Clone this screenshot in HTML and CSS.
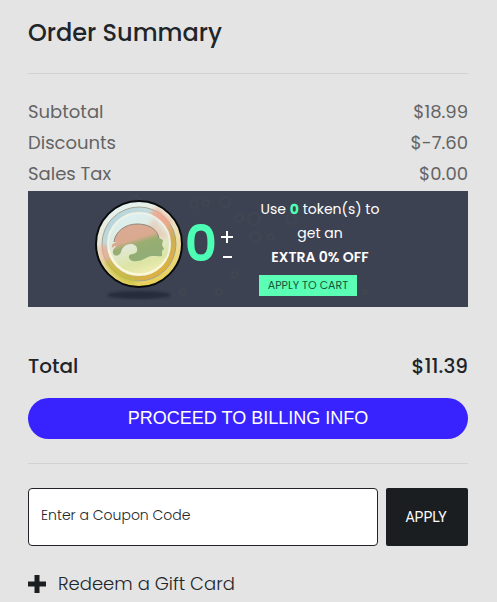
FILE: index.html
```html
<!DOCTYPE html>
<html lang="en">
<head>
    <meta charset="UTF-8">
    <meta name="viewport" content="width=device-width, initial-scale=1.0">
    <title>Order Summary</title>
    <link rel="stylesheet" href="styles.css">
</head>
<body>
    <main class="summary">
        <h1 class="summary-title">Order Summary</h1>
        <hr class="divider">

        <dl class="costs">
            <div class="cost-row">
                <dt>Subtotal</dt>
                <dd>$18.99</dd>
            </div>
            <div class="cost-row">
                <dt>Discounts</dt>
                <dd>$-7.60</dd>
            </div>
            <div class="cost-row">
                <dt>Sales Tax</dt>
                <dd>$0.00</dd>
            </div>
        </dl>

        <section class="tokens">
            <svg class="tokens-pattern" width="440" height="116" viewBox="0 0 440 116" fill="none" stroke="#424653" stroke-width="2" aria-hidden="true">
                <circle cx="107" cy="10" r="5"/>
                <circle cx="166" cy="13" r="4"/>
                <circle cx="178" cy="12" r="3"/>
                <circle cx="197" cy="11" r="5"/>
                <circle cx="211" cy="27" r="4"/>
                <circle cx="226" cy="28" r="6"/>
                <circle cx="263" cy="28" r="5"/>
                <circle cx="227" cy="46" r="5"/>
                <circle cx="243" cy="46" r="3"/>
                <circle cx="207" cy="84" r="3"/>
                <circle cx="155" cy="101" r="3"/>
                <circle cx="191" cy="101" r="3"/>
                <circle cx="337" cy="101" r="2"/>
            </svg>
            <svg class="coin" width="88" height="100" viewBox="0 0 88 100" aria-hidden="true">
                <defs>
                    <linearGradient id="coinRim" x1="0.3" y1="0" x2="0.7" y2="1">
                        <stop offset="0" stop-color="#e4f4f4"/>
                        <stop offset="0.35" stop-color="#ebe6d6"/>
                        <stop offset="0.65" stop-color="#eedc98"/>
                        <stop offset="1" stop-color="#e8cd4c"/>
                    </linearGradient>
                    <linearGradient id="coinRing" x1="0.1" y1="0.1" x2="0.8" y2="0.9">
                        <stop offset="0" stop-color="#b5d4dc"/>
                        <stop offset="0.3" stop-color="#c3dbdc"/>
                        <stop offset="0.5" stop-color="#e8ae94"/>
                        <stop offset="0.75" stop-color="#cfae58"/>
                        <stop offset="1" stop-color="#dfb13c"/>
                    </linearGradient>
                    <linearGradient id="coinFace" x1="0.3" y1="0" x2="0.6" y2="1">
                        <stop offset="0" stop-color="#dbf0f3"/>
                        <stop offset="0.5" stop-color="#e1e9d7"/>
                        <stop offset="0.8" stop-color="#dce4a4"/>
                        <stop offset="1" stop-color="#f2eeb4"/>
                    </linearGradient>
                    <linearGradient id="coinHead" x1="0.3" y1="0" x2="0.65" y2="0.8">
                        <stop offset="0" stop-color="#dda995"/>
                        <stop offset="0.48" stop-color="#d9aa8f"/>
                        <stop offset="0.65" stop-color="#99ad70"/>
                        <stop offset="1" stop-color="#92ad75"/>
                    </linearGradient>
                    <filter id="soft" x="-20%" y="-100%" width="140%" height="300%">
                        <feGaussianBlur stdDeviation="1.5"/>
                    </filter>
                    <filter id="blend" x="-20%" y="-20%" width="140%" height="140%">
                        <feGaussianBlur stdDeviation="2"/>
                    </filter>
                    <clipPath id="coinClip">
                        <circle cx="44" cy="44" r="42"/>
                    </clipPath>
                </defs>
                <ellipse cx="44" cy="95" rx="32" ry="4" fill="#252b3a" filter="url(#soft)"/>
                <circle cx="44" cy="44" r="43" fill="url(#coinRim)" stroke="#080b0c" stroke-width="2"/>
                <circle cx="44" cy="44" r="37" fill="url(#coinRing)" stroke="#a3a694" stroke-width="1"/>
                <g clip-path="url(#coinClip)" filter="url(#blend)">
                    <path d="M51 20 62 7 77 22 65 34Z" fill="#efa78e" opacity="0.8"/>
                    <path d="M4 47 14 44 20 61 10 65Z" fill="#e7ad95" opacity="0.8"/>
                    <path d="M9 62 16 58Q26 75 43 79L38 85Q18 80 9 62Z" fill="#c4c13c" opacity="0.8"/>
                </g>
                <circle cx="44" cy="44" r="31" fill="url(#coinFace)" stroke="#eef2e7" stroke-width="2"/>
                <path d="M58 17 74 37Q72 40 49 38Z" fill="#efb39a" opacity="0.45" filter="url(#blend)"/>
                <path d="M19 42C20 32 30 24 42 24C54 24 62 29 64 38L68 40L67 45L69 49L67 51L67 56C62 57 58 55 53 57C49 59 46 61 42 61C37 62 33 59 34 56C35 53 41 55 42 51C43 47 40 44 36 44C30 44 27 48 26 52C25 56 19 57 18 53C17 49 20 48 22 45C20 47 18 46 17 48C16 44 19 43 22 42Z" fill="url(#coinHead)"/>
                <path d="M19 42C20 32 30 24 42 24C54 24 62 29 64 38" fill="none" stroke="#8b8b7d" stroke-width="1"/>
                <path d="M14 50A31 31 0 0 0 71 59" fill="none" stroke="#fbf8d8" stroke-width="2"/>
            </svg>
            <output class="token-count" id="tokenCount">0</output>
            <div class="token-steps">
                <button type="button" class="step" aria-label="Add a token">
                    <svg width="12" height="12" viewBox="0 0 12 12"><path d="M6 0V12M0 6H12" stroke="#fff" stroke-width="2"/></svg>
                </button>
                <button type="button" class="step" aria-label="Remove a token">
                    <svg width="12" height="12" viewBox="0 0 12 12"><path d="M2 6H11" stroke="#fff" stroke-width="2"/></svg>
                </button>
            </div>
            <div class="token-offer">
                <p class="offer-text">Use <b class="offer-number">0</b> token(s) to<br>get an<br><b class="offer-deal">EXTRA 0% OFF</b></p>
                <button type="button" class="offer-button">APPLY TO CART</button>
            </div>
        </section>

        <div class="total">
            <span>Total</span>
            <span>$11.39</span>
        </div>
        <button type="button" class="proceed">PROCEED TO BILLING INFO</button>
        <hr class="divider">

        <form class="coupon">
            <input type="text" class="coupon-input" name="coupon" placeholder="Enter a Coupon Code" aria-label="Enter a Coupon Code">
            <button type="button" class="coupon-button">APPLY</button>
        </form>

        <a href="#" class="gift">
            <svg width="18" height="18" viewBox="0 0 18 18" aria-hidden="true"><path d="M9 0V18M0 9H18" stroke="#1a1e21" stroke-width="5"/></svg>
            Redeem a Gift Card
        </a>
    </main>
</body>
</html>
```

FILE: styles.css
```css
* {
    box-sizing: border-box;
}

body {
    margin: 0;
    background: #e4e4e4;
    color: #212529;
    font-family: Poppins, Inter, sans-serif;
}

button {
    border: 0;
    padding: 0;
    cursor: pointer;
}

.summary {
    padding: 16px 29px 0 28px;
}

.summary-title {
    margin: 0 0 24px;
    font-size: 24px;
    font-weight: 500;
    line-height: 33px;
}

.divider {
    height: 1px;
    margin: 24px 0;
    border: 0;
    background: #d1d2d3;
}

.costs {
    margin: -2px 0 2px;
    color: #636363;
    font-size: 18px;
    line-height: 31px;
}

.cost-row,
.total {
    display: flex;
    justify-content: space-between;
}

.cost-row dd {
    margin: 0;
}

.tokens {
    position: relative;
    display: flex;
    justify-content: center;
    align-items: flex-start;
    height: 116px;
    padding: 9px 20px 0 0;
    background: #3d4252;
    color: #fff;
    overflow: hidden;
}

/* faint rings behind the banner content */
.tokens-pattern {
    position: absolute;
    top: 0;
    left: 0;
}

.coin,
.token-count,
.token-steps,
.token-offer {
    position: relative;
    flex: none;
}

.token-count {
    width: 36px;
    color: #4dffb5;
    font-size: 50px;
    font-weight: 600;
    line-height: 88px;
    text-align: center;
}

.token-steps {
    display: flex;
    flex-direction: column;
    gap: 8px;
    margin: 31px 26px 0 2px;
}

.step {
    display: block;
    width: 12px;
    height: 12px;
    background: none;
}

.step svg {
    display: block;
}

.token-offer {
    width: 122px;
    margin-top: -3px;
}

.offer-text {
    margin: 0 0 6px;
    font-size: 14px;
    line-height: 24px;
    text-align: center;
    white-space: nowrap;
}

.offer-number {
    color: #4dffb5;
}

.offer-deal {
    font-weight: 600;
}

.offer-button {
    display: block;
    width: 98px;
    height: 21px;
    background: #5affb5;
    color: #17543c;
    font: 11px Poppins, Inter, sans-serif;
}

.total {
    margin: 44px 0 16px;
    font-size: 20px;
    font-weight: 500;
    line-height: 31px;
}

.proceed {
    display: block;
    width: 100%;
    height: 41px;
    border-radius: 21px;
    background: #3823ff;
    color: #fff;
    font: 18px "Liberation Sans", Arial, sans-serif;
}

.coupon {
    display: flex;
    gap: 8px;
    margin-bottom: 23px;
}

.coupon-input {
    flex: 1;
    min-width: 0;
    height: 58px;
    padding: 0 12px 4px;
    border: 1px solid #212529;
    border-radius: 4px;
    background: #fff;
    color: #212529;
    font: 300 14px Poppins, Inter, sans-serif;
}

.coupon-input::placeholder {
    color: #212529;
    opacity: 1;
}

.coupon-button {
    width: 82px;
    height: 58px;
    padding-right: 2px;
    border-radius: 2px;
    background: #1a1e21;
    color: #fff;
    font: 14px Roboto, Arial, sans-serif;
}

.gift {
    display: flex;
    align-items: center;
    gap: 12px;
    color: #212529;
    font-size: 18px;
    font-weight: 300;
    line-height: 30px;
    text-decoration: none;
}
```
